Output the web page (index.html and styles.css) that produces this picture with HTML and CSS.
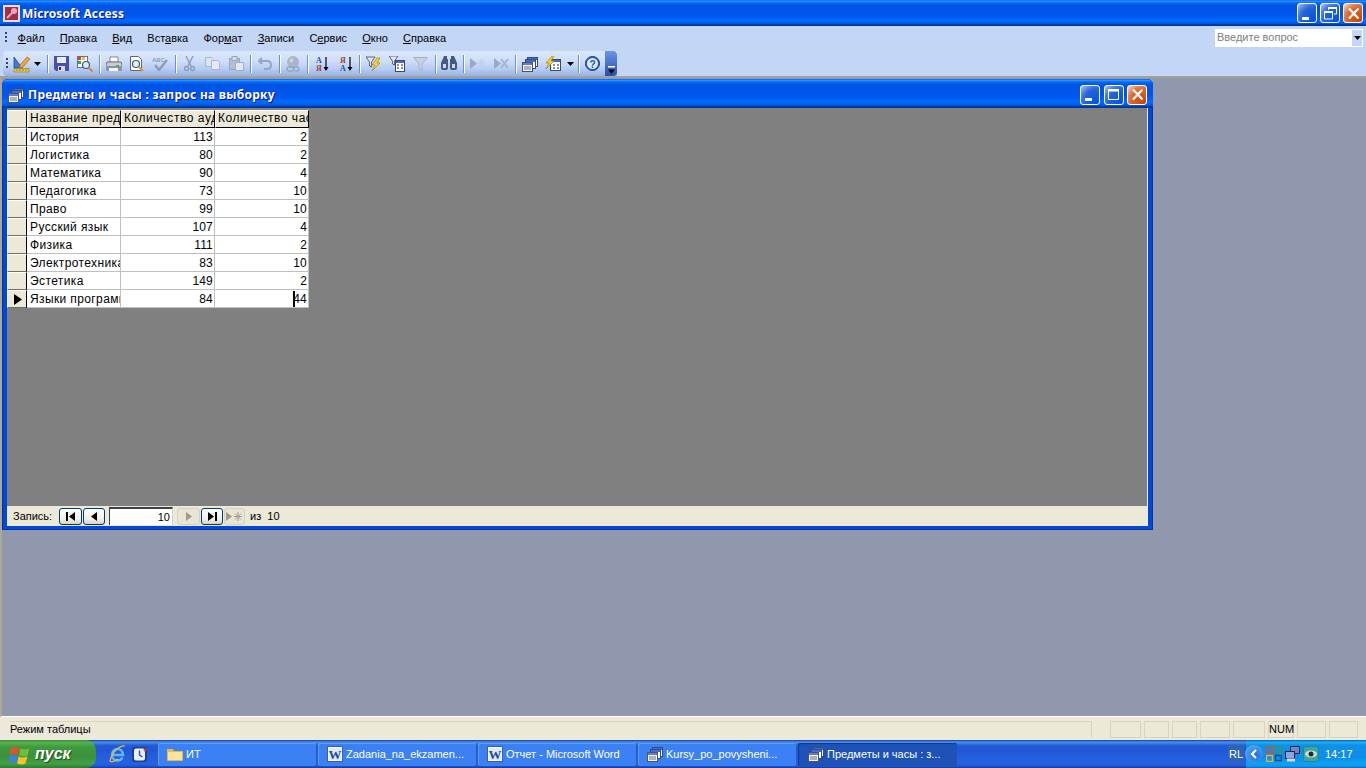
FILE: index.html
```html
<!DOCTYPE html>
<html lang="ru">
<head>
<meta charset="utf-8">
<title>Microsoft Access</title>
<link rel="stylesheet" href="styles.css">
</head>
<body>
<svg class="defs" width="0" height="0" aria-hidden="true">
  <symbol id="qry" viewBox="0 0 16 16">
    <rect x="5.5" y="1.5" width="10" height="9" fill="#fff" stroke="#3a4a78"/><rect x="6" y="2" width="9" height="2" fill="#3f6fd0"/>
    <rect x="3.5" y="3.5" width="10" height="9" fill="#fff" stroke="#3a4a78"/><rect x="4" y="4" width="9" height="2" fill="#3f6fd0"/>
    <rect x="0.5" y="6.5" width="10" height="9" fill="#f4f4f4" stroke="#4a5470"/><rect x="1" y="7" width="9" height="2" fill="#5f7fc4"/>
    <path d="M2 11h7M2 13h7" stroke="#68708a"/>
  </symbol>
  <symbol id="word" viewBox="0 0 16 16">
    <rect x="0.5" y="0.5" width="15" height="15" fill="#fff" stroke="#3b5ea8"/>
    <rect x="2" y="2" width="12" height="12" fill="#dfe9f8"/>
    <text x="8" y="13" text-anchor="middle" class="wglyph">W</text>
  </symbol>
  <symbol id="min" viewBox="0 0 19 19"><rect x="4" y="13" width="7" height="3" fill="#fff"/></symbol>
  <symbol id="max" viewBox="0 0 19 19"><path d="M4.5 5.5h10v9h-10z" fill="none" stroke="#fff"/><rect x="4" y="4" width="11" height="2.5" fill="#fff"/></symbol>
  <symbol id="res" viewBox="0 0 19 19"><path d="M7.5 6V3.5h8v6.5H13" fill="none" stroke="#fff"/><rect x="7" y="3" width="9" height="2" fill="#fff"/><path d="M3.5 7.5h8v7.5h-8z" fill="none" stroke="#fff"/><rect x="3" y="7" width="9" height="2" fill="#fff"/></symbol>
  <symbol id="cls" viewBox="0 0 19 19"><path d="M5 4.5l9.5 10M14.5 4.5L5 14.5" stroke="#fff" stroke-width="2.2" fill="none"/></symbol>
  <symbol id="caret" viewBox="0 0 7 4"><path d="M0 0h7L3.500 4z" fill="#000"/></symbol>
</svg>

<header class="app-title">
  <svg class="app-icon" width="17" height="17" viewBox="0 0 17 17"><rect x="0.5" y="0.5" width="16" height="16" fill="#f0d8dc" stroke="#e8e0e8"/><rect x="2" y="2" width="13" height="13" fill="#a03048"/><circle cx="11" cy="6" r="3" fill="#f0a8c0"/><path d="M9.5 7.5L4 13" stroke="#f0a8c0" stroke-width="2"/><path d="M5 10l2 2" stroke="#f0a8c0"/></svg>
  <span class="app-name">Microsoft Access</span>
  <div class="win-btns app-btns">
    <span class="wb"><svg width="19" height="19"><use href="#min"/></svg></span>
    <span class="wb"><svg width="19" height="19"><use href="#res"/></svg></span>
    <span class="wb wb-close"><svg width="19" height="19"><use href="#cls"/></svg></span>
  </div>
</header>

<nav class="menubar">
  <span class="grip"></span>
  <span class="mi"><u>Ф</u>айл</span>
  <span class="mi"><u>П</u>равка</span>
  <span class="mi"><u>В</u>ид</span>
  <span class="mi">Вст<u>а</u>вка</span>
  <span class="mi">Фор<u>м</u>ат</span>
  <span class="mi"><u>З</u>аписи</span>
  <span class="mi">С<u>е</u>рвис</span>
  <span class="mi"><u>О</u>кно</span>
  <span class="mi"><u>С</u>правка</span>
  <div class="ask"><span class="ask-text">Введите вопрос</span><span class="ask-arrow"><svg width="7" height="4"><use href="#caret"/></svg></span></div>
</nav>

<div class="toolrow">
  <div class="toolbar">
    <span class="grip grip-tb"></span>
    <span class="tb tb-first"><svg width="18" height="18" viewBox="0 0 18 18"><path d="M1 2l8 11H1z" fill="#3f78de" stroke="#1d3f90" stroke-width=".7"/><path d="M7 10l7-8 3 2-7 8-4 1z" fill="#f2a33c" stroke="#8a5a18" stroke-width=".6"/><rect x="1" y="13.500" width="15" height="3.500" fill="#e8c848" stroke="#8a7a20" stroke-width=".6"/><path d="M4 14v2M7 14v2M10 14v2M13 14v2" stroke="#6a5a10" stroke-width=".6"/></svg></span>
    <span class="tb-caret"><svg width="7" height="4"><use href="#caret"/></svg></span>
    <span class="sep sep-first"></span>
    <span class="tb"><svg width="15" height="15" viewBox="0 0 15 15"><path d="M0 0h15v15H2l-2-2z" fill="#4850a8"/><rect x="3" y="1" width="9" height="6" fill="#e8ecf8"/><rect x="4" y="10" width="7" height="5" fill="#d8d8e0"/><rect x="5" y="11" width="2" height="3" fill="#303060"/></svg></span>
    <span class="tb"><svg width="18" height="18" viewBox="0 0 18 18"><rect x="1.500" y="1.500" width="10" height="11" fill="#fff" stroke="#607090"/><rect x="2" y="2" width="3" height="3" fill="#e04030"/><rect x="6" y="2" width="3" height="3" fill="#f0c030"/><rect x="2" y="6" width="3" height="3" fill="#40a040"/><circle cx="10" cy="10" r="3.500" fill="#dbe8f8" stroke="#405878" stroke-width="1.200"/><path d="M12.500 12.500l4 4" stroke="#d08a30" stroke-width="2"/></svg></span>
    <span class="sep"></span>
    <span class="tb"><svg width="16" height="16" viewBox="0 0 16 16"><path d="M4 1h8v5H4z" fill="#fff" stroke="#707070" stroke-width=".8"/><path d="M1 6h14l1 3v5H0V9z" fill="#c8ccd8" stroke="#58606e" stroke-width=".8"/><rect x="0.500" y="10" width="15" height="4" fill="#8c92a0"/><rect x="10" y="9" width="3" height="2" fill="#30c030"/><path d="M3 12h9v3H3z" fill="#f4f4f4"/></svg></span>
    <span class="tb"><svg width="16" height="16" viewBox="0 0 16 16"><path d="M1.500.5h8l3 3v11h-11z" fill="#fff" stroke="#586880"/><circle cx="7" cy="8" r="3.500" fill="#e4eefb" stroke="#405878" stroke-width="1.200"/><path d="M9.500 10.500l4.500 4.500" stroke="#e09a30" stroke-width="2.200"/></svg></span>
    <span class="tb"><svg width="17" height="15" viewBox="0 0 17 15"><text x="0" y="6" class="abc">ABC</text><path d="M3 9l4 5L15 4" fill="none" stroke="#8f9bb2" stroke-width="2.400"/></svg></span>
    <span class="sep"></span>
    <span class="tb"><svg width="11" height="16" viewBox="0 0 11 16"><path d="M2 0l5 10M9 0L4 10" stroke="#8f9bb2" stroke-width="1.400"/><circle cx="2.500" cy="12.500" r="2" fill="none" stroke="#8f9bb2" stroke-width="1.400"/><circle cx="8.500" cy="12.500" r="2" fill="none" stroke="#8f9bb2" stroke-width="1.400"/></svg></span>
    <span class="tb"><svg width="15" height="13" viewBox="0 0 15 13"><path d="M.5.5h6l2 2v7h-8z" fill="#dde4f0" stroke="#a9b5ca"/><path d="M6.500 3.500h6l2 2v7h-8z" fill="#e4eaf4" stroke="#a9b5ca"/></svg></span>
    <span class="tb"><svg width="15" height="15" viewBox="0 0 15 15"><rect x=".5" y="2.500" width="10" height="11" fill="#b3bfd4" stroke="#98a5bc"/><rect x="3" y=".5" width="5" height="4" fill="#d5dcea" stroke="#98a5bc"/><path d="M6.500 6.500h8v8h-8z" fill="#e2e8f2" stroke="#a2aec4"/></svg></span>
    <span class="sep"></span>
    <span class="tb"><svg width="14" height="13" viewBox="0 0 14 13"><path d="M4 1L1 4l3 3M1.500 4H9c3 0 4 2 4 4s-1 4-4 4H6" fill="none" stroke="#98a5bc" stroke-width="2"/></svg></span>
    <span class="sep"></span>
    <span class="tb"><svg width="14" height="16" viewBox="0 0 14 16"><circle cx="7" cy="6" r="6" fill="#aab5c9"/><circle cx="5.500" cy="4.500" r="2" fill="#cbd4e3"/><path d="M1 13a2 2 0 012-2h3a2 2 0 010 4H3a2 2 0 01-2-2zM7 13a2 2 0 012-2h2a2 2 0 010 4H9" fill="none" stroke="#98a5bc" stroke-width="1.400"/></svg></span>
    <span class="sep"></span>
    <span class="tb"><svg width="15" height="16" viewBox="0 0 15 16"><text x="5" y="7" text-anchor="middle" class="sort sort-b">А</text><text x="5" y="15" text-anchor="middle" class="sort sort-r">Я</text><path d="M12 1v12" stroke="#000" stroke-width="1.200"/><path d="M9.500 11h5L12 15z" fill="#000"/></svg></span>
    <span class="tb"><svg width="15" height="16" viewBox="0 0 15 16"><text x="5" y="7" text-anchor="middle" class="sort sort-r">Я</text><text x="5" y="15" text-anchor="middle" class="sort sort-b">А</text><path d="M12 1v12" stroke="#000" stroke-width="1.200"/><path d="M9.500 11h5L12 15z" fill="#000"/></svg></span>
    <span class="sep"></span>
    <span class="tb"><svg width="16" height="16" viewBox="0 0 16 16"><path d="M0 1h9L5.500 6v5L3.500 10V6z" fill="#dfe6f2" stroke="#3c4a66" stroke-width=".8"/><path d="M11 2L6 9h3l-3 6 8-8h-3l3-5z" fill="#f8d030" stroke="#9a7a10" stroke-width=".6"/></svg></span>
    <span class="tb"><svg width="16" height="16" viewBox="0 0 16 16"><path d="M0 0h9L5.500 5v4L3.500 8V5z" fill="#dfe6f2" stroke="#3c4a66" stroke-width=".8"/><rect x="6.500" y="4.500" width="9" height="11" fill="#fff" stroke="#3c4a66"/><rect x="7" y="5" width="8" height="2" fill="#3f6fd0"/><path d="M8 9h2M8 12h2M12 9h2M12 12h2" stroke="#222" stroke-width="1.200"/></svg></span>
    <span class="tb"><svg width="15" height="14" viewBox="0 0 15 14"><path d="M.5.5h14L9 7v6.500l-3-2V7z" fill="#c6d0e2" stroke="#a6b2c8"/></svg></span>
    <span class="sep"></span>
    <span class="tb"><svg width="16" height="15" viewBox="0 0 16 15"><path d="M3 0h3v3h1v9a2 2 0 01-2 2H2a2 2 0 01-2-2V7zM10 0h3l3 7v5a2 2 0 01-2 2h-3a2 2 0 01-2-2V3h1z" fill="#46597e"/><path d="M2 8h3v4H2zM11 8h3v4h-3z" fill="#c8d8f0"/></svg></span>
    <span class="sep"></span>
    <span class="tb"><svg width="15" height="13" viewBox="0 0 15 13"><path d="M0 1l7 5.500L0 12z" fill="#9aa8c0"/><path d="M11 2v9M7 6.500h8M8 3.500l6 6M14 3.500l-6 6" stroke="#c4d0e2" stroke-width="1.200"/></svg></span>
    <span class="tb"><svg width="15" height="13" viewBox="0 0 15 13"><path d="M0 1l7 5.500L0 12z" fill="#9aa8c0"/><path d="M7 2l7 9M14 2l-7 9" stroke="#a8b4c8" stroke-width="2"/></svg></span>
    <span class="sep"></span>
    <span class="tb"><svg width="16" height="16"><use href="#qry"/></svg></span>
    <span class="tb tb-obj"><svg width="16" height="16" viewBox="0 0 16 16"><rect x="5.500" y="3.500" width="10" height="11" fill="#fff" stroke="#3c4a66"/><rect x="6" y="4" width="9" height="2" fill="#3f6fd0"/><path d="M8 9h2M8 12h2M12 9h2M12 12h2" stroke="#222" stroke-width="1.200"/><path d="M7 0L1 7h3l-3 6 8-8H6l3-5z" fill="#f8d030" stroke="#9a7a10" stroke-width=".6"/></svg></span>
    <span class="tb-caret"><svg width="7" height="4"><use href="#caret"/></svg></span>
    <span class="sep"></span>
    <span class="tb"><svg width="15" height="15" viewBox="0 0 15 15"><circle cx="7.500" cy="7.500" r="7" fill="#2d5fc8" stroke="#1a3c90"/><circle cx="7.500" cy="7.500" r="5.500" fill="#dfeafb"/><text x="7.500" y="11.500" text-anchor="middle" class="help">?</text></svg></span>
    <span class="chevron"><svg width="7" height="8" viewBox="0 0 7 8"><path d="M0 0h7v1.500H0z" fill="#fff"/><path d="M0 3.500h7L3.500 8z" fill="#000"/></svg></span>
  </div>
</div>

<main class="workspace">
  <section class="child">
    <div class="child-title">
      <svg width="16" height="16"><use href="#qry"/></svg>
      <span class="child-name">Предметы и часы : запрос на выборку</span>
      <div class="win-btns child-btns">
        <span class="wb"><svg width="19" height="19"><use href="#min"/></svg></span>
        <span class="wb"><svg width="19" height="19"><use href="#max"/></svg></span>
        <span class="wb wb-close"><svg width="19" height="19"><use href="#cls"/></svg></span>
      </div>
    </div>
    <div class="client">
      <div class="datasheet">
        <table class="grid">
          <thead>
            <tr><th class="sel"></th><th>Название предмета</th><th>Количество аудиторий</th><th>Количество часов</th></tr>
          </thead>
          <tbody>
            <tr><td class="sel"></td><td>История</td><td class="num">113</td><td class="num">2</td></tr>
            <tr><td class="sel"></td><td>Логистика</td><td class="num">80</td><td class="num">2</td></tr>
            <tr><td class="sel"></td><td>Математика</td><td class="num">90</td><td class="num">4</td></tr>
            <tr><td class="sel"></td><td>Педагогика</td><td class="num">73</td><td class="num">10</td></tr>
            <tr><td class="sel"></td><td>Право</td><td class="num">99</td><td class="num">10</td></tr>
            <tr><td class="sel"></td><td>Русский язык</td><td class="num">107</td><td class="num">4</td></tr>
            <tr><td class="sel"></td><td>Физика</td><td class="num">111</td><td class="num">2</td></tr>
            <tr><td class="sel"></td><td>Электротехника</td><td class="num">83</td><td class="num">10</td></tr>
            <tr><td class="sel"></td><td>Эстетика</td><td class="num">149</td><td class="num">2</td></tr>
            <tr><td class="sel cur"><svg width="9" height="11" viewBox="0 0 9 11"><path d="M0 0l8 5.500L0 11z" fill="#000"/></svg></td><td>Языки программирования</td><td class="num">84</td><td class="num cursor-cell"><span class="caret-i"></span>44</td></tr>
          </tbody>
        </table>
      </div>
      <div class="navbar">
        <span class="nav-label">Запись:</span>
        <span class="nb"><svg width="10" height="9" viewBox="0 0 10 9"><path d="M0 0h2v9H0zM9 0v9L3 4.500z" fill="#000"/></svg></span>
        <span class="nb nb-prev"><svg width="6" height="9" viewBox="0 0 6 9"><path d="M6 0v9L0 4.500z" fill="#000"/></svg></span>
        <span class="nav-input">10</span>
        <span class="nb nb-off"><svg width="6" height="9" viewBox="0 0 6 9"><path d="M0 0v9l6-4.500z" fill="#a09c88"/></svg></span>
        <span class="nb nb-last"><svg width="10" height="9" viewBox="0 0 10 9"><path d="M8 0h2v9H8zM1 0v9l6-4.500z" fill="#000"/></svg></span>
        <span class="nb nb-off nb-new"><svg width="17" height="9" viewBox="0 0 17 9"><path d="M0 0v9l6-4.500z" fill="#a09c88"/><path d="M12 0v9M8 4.500h8M9 1.500l6 6M15 1.500l-6 6" stroke="#a09c88"/></svg></span>
        <span class="nav-total">из&nbsp; 10</span>
      </div>
    </div>
  </section>
</main>

<footer class="statusbar">
  <span class="st st-main">Режим таблицы</span>
  <span class="st st-a"></span>
  <span class="st st-b"></span>
  <span class="st st-b"></span>
  <span class="st st-c"></span>
  <span class="st st-d"></span>
  <span class="st st-num">NUM</span>
  <span class="st st-e"></span>
  <span class="st st-f"></span>
</footer>

<div class="taskbar">
  <div class="start">
    <svg width="22" height="21" viewBox="0 0 22 21"><path d="M2 4q4-2 8 0l-1.500 7q-4-2-8 0z" fill="#e2522a"/><path d="M11.500 4.500q4 2 9 0l-2 7q-4 2-8.500 0z" fill="#6cc03c"/><path d="M.5 12q4-2 8 0l-1.500 7q-4-2-8 0z" fill="#3f7fe0"/><path d="M9.500 12.500q4 2 9 0l-2 7q-4 2-8.500 0z" fill="#f5c32c"/></svg>
    <span class="start-text">пуск</span>
  </div>
  <div class="quick">
    <svg width="17" height="18" viewBox="0 0 17 18"><path d="M3 10h11c0-4-2.500-6-5.500-6S3 6.500 3 10s2.500 5.500 5.500 5.500c2.500 0 4-1 5-3" fill="none" stroke="#5ab8ff" stroke-width="2.400"/><path d="M16 1C11 0 3 7 1 16c2 2 5 0 8-2" fill="none" stroke="#e8b83a" stroke-width="1.200"/></svg>
    <svg width="17" height="17" viewBox="0 0 17 17"><rect x="1" y="1" width="15" height="15" rx="3" fill="#1d3f90"/><rect x="3" y="2.500" width="11" height="12" rx="2" fill="#eaf2fb"/><path d="M8.500 4.500v4.500l3 2" fill="none" stroke="#2a5fc0" stroke-width="1.500"/><circle cx="14" cy="4" r="1.500" fill="#e04030"/></svg>
  </div>
  <div class="task"><svg width="16" height="14" viewBox="0 0 16 14"><path d="M0 2h6l1 2h9v9a1 1 0 01-1 1H1a1 1 0 01-1-1z" fill="#e8b848"/><path d="M1 5h14v8H1z" fill="#fbe39a"/></svg><span class="task-t">ИТ</span></div>
  <div class="task"><svg width="16" height="16"><use href="#word"/></svg><span class="task-t">Zadania_na_ekzamen...</span></div>
  <div class="task"><svg width="16" height="16"><use href="#word"/></svg><span class="task-t">Отчет - Microsoft Word</span></div>
  <div class="task"><svg width="16" height="16"><use href="#qry"/></svg><span class="task-t">Kursy_po_povysheni...</span></div>
  <div class="task task-on"><svg width="16" height="16"><use href="#qry"/></svg><span class="task-t">Предметы и часы : з...</span></div>
  <span class="lang">RL</span>
  <div class="tray">
    <span class="chev"><svg width="9" height="10" viewBox="0 0 9 10"><path d="M6 1L2 5l4 4" fill="none" stroke="#fff" stroke-width="2.200"/></svg></span>
    <svg width="16" height="16" viewBox="0 0 16 16"><path d="M.5.5h6v6h-6z" fill="none" stroke="#e04a20" stroke-width="1.400"/><path d="M9.500 1.500h6v5h-6z" fill="none" stroke="#3a9a50" stroke-width="1.400"/><path d="M.5 9.500h6v6h-6z" fill="none" stroke="#f0b020" stroke-width="1.400"/><path d="M9.500 9.500h6v5h-6z" fill="none" stroke="#204a90" stroke-width="1.400"/></svg>
    <svg width="15" height="16" viewBox="0 0 15 16"><rect x="5.500" y=".5" width="9" height="7" fill="#6f86c8" stroke="#1e2a50"/><rect x=".5" y="5.500" width="9" height="7" fill="#8fa3dc" stroke="#1e2a50"/><rect x="2" y="12.500" width="8" height="3" fill="#d8d8e0"/></svg>
    <svg width="16" height="16" viewBox="0 0 16 16"><rect width="16" height="16" rx="3" fill="#1d8a8f"/><rect x="1" y="1" width="14" height="14" rx="2" fill="#3aa7a5"/><ellipse cx="8" cy="8" rx="6" ry="3.500" fill="#d7dbd4"/><circle cx="8" cy="8" r="2.500" fill="#1f2f30"/></svg>
    <span class="clock">14:17</span>
  </div>
</div>
</body>
</html>
```

FILE: styles.css
```css
* { box-sizing: border-box; }
html, body { margin: 0; padding: 0; }
body {
  width: 1366px;
  height: 768px;
  overflow: hidden;
  display: flex;
  flex-direction: column;
  font-family: "Liberation Sans", Arial, sans-serif;
  font-size: 11px;
  background: #c3d6f6;
  color: #000;
}
.defs { position: absolute; }
svg { display: block; flex: none; }
.wglyph { font: bold 13px "Liberation Serif", serif; fill: #1c4ba0; }
.abc { font: bold 6px "Liberation Sans", sans-serif; fill: #8f9bb2; }
.sort { font: bold 8px "Liberation Serif", serif; }
.sort-b { fill: #2a4f9a; }
.sort-r { fill: #a83a3a; }
.help { font: bold 10px "Liberation Sans", sans-serif; fill: #2050b8; }

/* Title bars */
.app-title, .child-title {
  display: flex;
  align-items: center;
  color: #fff;
  font-family: "Noto Sans", sans-serif;
  font-weight: bold;
  text-shadow: 1px 1px 0 #0f1089;
  background: linear-gradient(#0058ee 0, #3593ff 4%, #288eff 6%, #127dff 8%, #036ffc 10%, #0262ee 14%, #0057e5 20%, #0054e3 24%, #0055eb 56%, #005bf5 66%, #026afe 76%, #0062ef 86%, #0052d6 92%, #0040ab 94%, #003092 100%);
}
.app-title { height: 26px; padding-left: 3px; flex: none; }
.app-icon { margin-right: 2px; }
.app-name { font-size: 12px; padding-top: 1px; letter-spacing: .12px; }
.win-btns { margin-left: auto; display: flex; }
.app-btns { gap: 3px; padding-right: 3px; }
.wb {
  width: 20px;
  height: 20px;
  border: 1px solid #fff;
  border-radius: 3px;
  background: radial-gradient(circle at 90% 90%, #0054e9 0, #2263d5 55%, #4479e4 70%, #a3bbec 95%);
  display: flex;
  align-items: center;
  justify-content: center;
}
.wb-close { background: radial-gradient(circle at 90% 90%, #cc4600 0, #dc6527 55%, #e0804f 70%, #ffccb2 95%); }

/* Menu */
.menubar {
  flex: none;
  height: 25px;
  display: flex;
  align-items: center;
  padding: 0 0 1px 5px;
  background: #c3d6f6;
}
.grip {
  width: 2px;
  height: 12px;
  margin-right: 3px;
  background: repeating-linear-gradient(#27418c 0 2px, transparent 2px 4px);
  flex: none;
}
.mi { padding: 0 7.6px; white-space: nowrap; }
.mi u { text-decoration-thickness: 1px; }
.ask {
  margin-left: auto;
  margin-right: 3px;
  width: 148px;
  height: 18px;
  background: #fff;
  display: flex;
  align-items: center;
  color: #808080;
  padding-left: 2px;
}
.ask-text { flex: 1; padding-bottom: 2px; }
.ask-arrow {
  width: 12px;
  height: 18px;
  background: #c3d6f6;
  border: 1px solid #fff;
  display: flex;
  align-items: center;
  justify-content: center;
}

/* Toolbar */
.toolrow {
  flex: none;
  height: 27px;
  padding-bottom: 1px;
  background: #c3d6f6;
  border-bottom: 2px solid #a2a294;
}
.toolbar {
  width: 614px;
  height: 25px;
  margin-left: 3px;
  display: flex;
  align-items: center;
  border-radius: 4px 0 0 4px;
  background: linear-gradient(#dbe7fa 0, #cedefa 40%, #b8cdf2 70%, #98b2e4 100%);
}
.grip-tb { margin-left: 3px; margin-right: 3px; }
.tb {
  width: 23.5px;
  height: 23px;
  display: flex;
  align-items: center;
  justify-content: center;
  flex: none;
}
.tb-first { width: 21px; }
.tb-caret { width: 10.5px; display: flex; justify-content: center; flex: none; }
.sep { width: 5px; height: 18px; flex: none; background: linear-gradient(#6f8fc8, #6f8fc8) 2px 0 / 1px 100% no-repeat, linear-gradient(#fff, #fff) 3px 0 / 1px 100% no-repeat; }
.sep-first { margin-left: 2.5px; }
.chevron {
  margin-left: auto;
  width: 12px;
  height: 25px;
  border-radius: 0 4px 4px 0;
  background: linear-gradient(#6a96e4, #2450ae);
  display: flex;
  align-items: flex-end;
  justify-content: center;
  padding-bottom: 2px;
}

/* Workspace */
.workspace {
  flex: 1;
  position: relative;
  background: #9198ae;
  border-left: 2px solid #aca899;
  border-bottom: 1px solid #fff;
}
.child {
  position: absolute;
  left: 0;
  top: 1px;
  width: 1151px;
  height: 451px;
  display: flex;
  flex-direction: column;
  background: #0048d8;
  box-shadow: inset 0 0 0 1px #0831a8;
  border-radius: 6px 6px 0 0;
}
.child-title {
  height: 29px;
  padding: 2px 6px 0 6px;
  flex: none;
  border-radius: 6px 6px 0 0;
}
.child-name { font-size: 12px; margin-left: 4px; letter-spacing: .26px; }
.child-btns { gap: 3.5px; }
.client {
  flex: 1;
  margin: 0 5px 4px;
  display: flex;
  flex-direction: column;
  border-right: 1px solid #ece9d8;
}
.datasheet { flex: 1; background: #808080; padding-top: 2px; }

.grid {
  border-collapse: separate;
  border-spacing: 0;
  table-layout: fixed;
  width: 302px;
  font: 12px "Liberation Sans", Arial, sans-serif;
  letter-spacing: .38px;
}
.grid th, .grid td {
  height: 18px;
  width: 94px;
  padding: 0 1px 0 3px;
  overflow: hidden;
  white-space: nowrap;
  font-weight: normal;
  text-align: left;
  background: #fff;
  border-right: 1px solid #c0c0c0;
  border-bottom: 1px solid #c0c0c0;
}
.grid th {
  background: #ece9d8;
  border-top: 1px solid #fff;
  border-left: 1px solid #fff;
  border-right: 1px solid #000;
  border-bottom: 1px solid #000;
  padding: 0 0 2px 2px;
  letter-spacing: .55px;
}
.grid .sel {
  width: 20px;
  padding: 0;
  background: #ece9d8;
  border-top: 1px solid #fff;
  border-left: 1px solid #fff;
  border-right: 1px solid #000;
  border-bottom: 1px solid #716f64;
}
.grid .cur svg { margin-left: 6px; }
.grid td.num { text-align: right; padding-right: 1px; letter-spacing: .2px; }
.cursor-cell { position: relative; }
.caret-i {
  position: absolute;
  right: 13px;
  top: 1px;
  width: 2px;
  height: 16px;
  background: #000;
}

/* Record navigation */
.navbar {
  flex: none;
  height: 20px;
  background: #ece9d8;
  display: flex;
  align-items: center;
  padding-left: 6px;
  color: #000;
}
.nav-label { width: 45px; }
.nb {
  width: 23px;
  height: 17px;
  margin-left: 1px;
  flex: none;
  border: 1px solid #003c74;
  border-radius: 3px;
  background: linear-gradient(#fff, #f0efe6 70%, #d6d0c5);
  display: flex;
  align-items: center;
  justify-content: center;
}
.nb-off { border-color: #d6d2c2; background: #e8e5d6; }
.nb-prev { width: 22px; margin-right: 4px; }
.nb-last { width: 22px; }
.nb-new { width: 21px; }
.nav-input {
  width: 64px;
  height: 18px;
  margin-right: 3px;
  background: #fff;
  border-top: 2px solid #404040;
  border-left: 1px solid #404040;
  border-right: 1px solid #d4d0c8;
  text-align: right;
  padding-right: 2px;
  line-height: 16px;
}
.nav-total { margin-left: 5px; }

/* Status bar */
.statusbar {
  flex: none;
  height: 23px;
  background: #ece9d8;
  display: flex;
  align-items: flex-end;
  padding: 0 8px 2px 10px;
  gap: 3px;
}
.st {
  height: 17px;
  border: 1px solid #d8d4c2;
  flex: none;
  line-height: 15px;
  white-space: nowrap;
}
.st-main { width: 1082px; border-left: 0; border-bottom: 0; }
.st-a { width: 31px; margin-left: 15px; }
.st-b { width: 25px; }
.st-c { width: 30px; }
.st-d { width: 32px; }
.st-num { width: 26px; text-align: center; }
.st-e { width: 29px; }
.st-f { width: 29px; }

/* Task bar */
.taskbar {
  flex: none;
  height: 28px;
  display: flex;
  align-items: center;
  color: #fff;
  background: linear-gradient(#1f2f86 0, #3165c4 3%, #3682e5 6%, #4490e6 10%, #3883e5 12%, #2b71e0 15%, #2663da 18%, #235bd6 20%, #2258d5 23%, #2157d6 38%, #245ddb 54%, #2562df 86%, #245fdc 89%, #2158d4 92%, #1d4ec0 95%, #1941a5 98%);
}
.start {
  width: 96px;
  height: 28px;
  flex: none;
  display: flex;
  align-items: center;
  gap: 4px;
  padding-left: 9px;
  border-radius: 0 10px 10px 0;
  background: linear-gradient(#388e3c 0, #5ab24e 10%, #3e993f 25%, #3a923b 60%, #43a047 85%, #2d7a2f 100%);
}
.start-text {
  font: italic bold 16px "Liberation Sans", sans-serif;
  text-shadow: 1px 1px 1px #1c4a1c;
  color: #fff;
}
.quick {
  width: 62px;
  flex: none;
  display: flex;
  align-items: center;
  gap: 5px;
  padding-left: 13px;
}
.task {
  width: 158px;
  height: 23px;
  margin-right: 2px;
  flex: none;
  display: flex;
  align-items: center;
  gap: 3px;
  padding-left: 9px;
  border-radius: 2px;
  background: #3c81f3;
  box-shadow: inset 1px 1px 0 #5e9bff;
}
.task-on { background: #1e52b7; box-shadow: inset 1px 1px 1px #113a8c; padding-left: 10px; width: 159px; }
.task-t { white-space: nowrap; }
.lang {
  margin-left: auto;
  width: 16px;
  height: 18px;
  line-height: 18px;
  text-align: center;
  background: #2e63b8;
  margin-right: 2px;
}
.tray {
  width: 120px;
  height: 28px;
  flex: none;
  display: flex;
  align-items: center;
  gap: 3px;
  background: linear-gradient(#0c59b9 0, #139ee9 6%, #18b5f2 10%, #139beb 14%, #1290e8 19%, #0d8dea 63%, #0d9ff1 81%, #0f9eed 88%, #119be9 91%, #1392e2 94%, #137ed7 97%, #095bc9);
}
.chev {
  width: 18px;
  height: 18px;
  margin-left: -1px;
  border-radius: 50%;
  background: radial-gradient(circle at 60% 60%, #1f6fe0, #4da0f0 70%, #e0f0ff);
  display: flex;
  align-items: center;
  justify-content: center;
  flex: none;
}
.clock { margin-left: 3px; }
```
